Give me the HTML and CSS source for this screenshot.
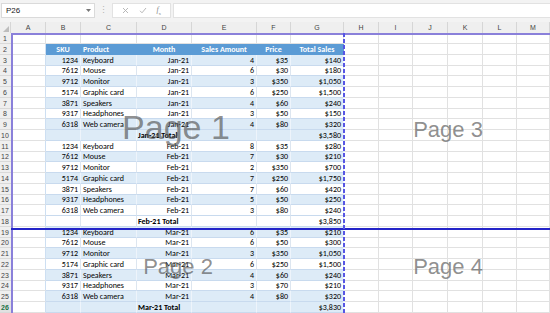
FILE: index.html
```html
<!DOCTYPE html>
<html lang="en">
<head>
<meta charset="utf-8">
<title>Page Break Preview</title>
<link rel="stylesheet" href="styles.css">
</head>
<body>
<div class="app">
  <div class="toolbar">
    <div class="namebox"><span>P26</span><svg class="caret" width="5" height="3" viewBox="0 0 5 3"><path d="M0 0H5L2.5 3Z" fill="#777"/></svg></div>
    <div class="grip">⋮</div>
    <div class="fxbtns">
      <svg width="7" height="7" viewBox="0 0 7 7"><path d="M1 1L6 6M6 1L1 6" stroke="#b0b0b0" stroke-width="0.9" fill="none"/></svg>
      <svg width="8" height="7" viewBox="0 0 8 7"><path d="M1 3.8L3 5.8L7 1" stroke="#b0b0b0" stroke-width="0.9" fill="none"/></svg>
      <span class="fx"><i>f</i><sub>x</sub></span>
    </div>
    <div class="formula"></div>
  </div>

  <div class="sheet">
    <div class="row hdr">
      <div class="corner"><svg width="6" height="6" viewBox="0 0 6 6"><path d="M6 0V6H0Z" fill="#bdbdbd"/></svg></div>
      <div class="ch">A</div><div class="ch">B</div><div class="ch">C</div><div class="ch">D</div><div class="ch">E</div><div class="ch">F</div><div class="ch">G</div><div class="ch">H</div><div class="ch">I</div><div class="ch">J</div><div class="ch">K</div><div class="ch">L</div><div class="ch">M</div>
    </div>

    <div class="row">
      <div class="rh">1</div><div class="c"></div>
      <div class="c"></div><div class="c"></div><div class="c"></div><div class="c"></div><div class="c"></div><div class="c"></div>
      <div class="c"></div><div class="c"></div><div class="c"></div><div class="c"></div><div class="c"></div><div class="c"></div>
    </div>

    <div class="row head">
      <div class="rh">2</div><div class="c ta"></div>
      <div class="t">SKU</div><div class="t l">Product</div><div class="t">Month</div><div class="t">Sales Amount</div><div class="t">Price</div><div class="t">Total Sales</div>
      <div class="c"></div><div class="c"></div><div class="c"></div><div class="c"></div><div class="c"></div><div class="c"></div>
    </div>

    <div class="row band">
      <div class="rh">3</div><div class="c ta"></div>
      <div class="t n">1234</div><div class="t">Keyboard</div><div class="t n">Jan-21</div><div class="t n">4</div><div class="t n">$35</div><div class="t n">$140</div>
      <div class="c"></div><div class="c"></div><div class="c"></div><div class="c"></div><div class="c"></div><div class="c"></div>
    </div>
    <div class="row">
      <div class="rh">4</div><div class="c ta"></div>
      <div class="t n">7612</div><div class="t">Mouse</div><div class="t n">Jan-21</div><div class="t n">6</div><div class="t n">$30</div><div class="t n">$180</div>
      <div class="c"></div><div class="c"></div><div class="c"></div><div class="c"></div><div class="c"></div><div class="c"></div>
    </div>
    <div class="row band">
      <div class="rh">5</div><div class="c ta"></div>
      <div class="t n">9712</div><div class="t">Monitor</div><div class="t n">Jan-21</div><div class="t n">3</div><div class="t n">$350</div><div class="t n">$1,050</div>
      <div class="c"></div><div class="c"></div><div class="c"></div><div class="c"></div><div class="c"></div><div class="c"></div>
    </div>
    <div class="row">
      <div class="rh">6</div><div class="c ta"></div>
      <div class="t n">5174</div><div class="t">Graphic card</div><div class="t n">Jan-21</div><div class="t n">6</div><div class="t n">$250</div><div class="t n">$1,500</div>
      <div class="c"></div><div class="c"></div><div class="c"></div><div class="c"></div><div class="c"></div><div class="c"></div>
    </div>
    <div class="row band">
      <div class="rh">7</div><div class="c ta"></div>
      <div class="t n">3871</div><div class="t">Speakers</div><div class="t n">Jan-21</div><div class="t n">4</div><div class="t n">$60</div><div class="t n">$240</div>
      <div class="c"></div><div class="c"></div><div class="c"></div><div class="c"></div><div class="c"></div><div class="c"></div>
    </div>
    <div class="row">
      <div class="rh">8</div><div class="c ta"></div>
      <div class="t n">9317</div><div class="t">Headphones</div><div class="t n">Jan-21</div><div class="t n">3</div><div class="t n">$50</div><div class="t n">$150</div>
      <div class="c"></div><div class="c"></div><div class="c"></div><div class="c"></div><div class="c"></div><div class="c"></div>
    </div>
    <div class="row band">
      <div class="rh">9</div><div class="c ta"></div>
      <div class="t n">6318</div><div class="t">Web camera</div><div class="t n">Jan-21</div><div class="t n">4</div><div class="t n">$80</div><div class="t n">$320</div>
      <div class="c"></div><div class="c"></div><div class="c"></div><div class="c"></div><div class="c"></div><div class="c"></div>
    </div>
    <div class="row band">
      <div class="rh">10</div><div class="c ta"></div>
      <div class="t"></div><div class="t"></div><div class="t tot">Jan-21 Total</div><div class="t"></div><div class="t"></div><div class="t n">$3,580</div>
      <div class="c"></div><div class="c"></div><div class="c"></div><div class="c"></div><div class="c"></div><div class="c"></div>
    </div>

    <div class="row">
      <div class="rh">11</div><div class="c ta"></div>
      <div class="t n">1234</div><div class="t">Keyboard</div><div class="t n">Feb-21</div><div class="t n">8</div><div class="t n">$35</div><div class="t n">$280</div>
      <div class="c"></div><div class="c"></div><div class="c"></div><div class="c"></div><div class="c"></div><div class="c"></div>
    </div>
    <div class="row band">
      <div class="rh">12</div><div class="c ta"></div>
      <div class="t n">7612</div><div class="t">Mouse</div><div class="t n">Feb-21</div><div class="t n">7</div><div class="t n">$30</div><div class="t n">$210</div>
      <div class="c"></div><div class="c"></div><div class="c"></div><div class="c"></div><div class="c"></div><div class="c"></div>
    </div>
    <div class="row">
      <div class="rh">13</div><div class="c ta"></div>
      <div class="t n">9712</div><div class="t">Monitor</div><div class="t n">Feb-21</div><div class="t n">2</div><div class="t n">$350</div><div class="t n">$700</div>
      <div class="c"></div><div class="c"></div><div class="c"></div><div class="c"></div><div class="c"></div><div class="c"></div>
    </div>
    <div class="row band">
      <div class="rh">14</div><div class="c ta"></div>
      <div class="t n">5174</div><div class="t">Graphic card</div><div class="t n">Feb-21</div><div class="t n">7</div><div class="t n">$250</div><div class="t n">$1,750</div>
      <div class="c"></div><div class="c"></div><div class="c"></div><div class="c"></div><div class="c"></div><div class="c"></div>
    </div>
    <div class="row">
      <div class="rh">15</div><div class="c ta"></div>
      <div class="t n">3871</div><div class="t">Speakers</div><div class="t n">Feb-21</div><div class="t n">7</div><div class="t n">$60</div><div class="t n">$420</div>
      <div class="c"></div><div class="c"></div><div class="c"></div><div class="c"></div><div class="c"></div><div class="c"></div>
    </div>
    <div class="row band">
      <div class="rh">16</div><div class="c ta"></div>
      <div class="t n">9317</div><div class="t">Headphones</div><div class="t n">Feb-21</div><div class="t n">5</div><div class="t n">$50</div><div class="t n">$250</div>
      <div class="c"></div><div class="c"></div><div class="c"></div><div class="c"></div><div class="c"></div><div class="c"></div>
    </div>
    <div class="row">
      <div class="rh">17</div><div class="c ta"></div>
      <div class="t n">6318</div><div class="t">Web camera</div><div class="t n">Feb-21</div><div class="t n">3</div><div class="t n">$80</div><div class="t n">$240</div>
      <div class="c"></div><div class="c"></div><div class="c"></div><div class="c"></div><div class="c"></div><div class="c"></div>
    </div>
    <div class="row">
      <div class="rh">18</div><div class="c ta"></div>
      <div class="t"></div><div class="t"></div><div class="t tot">Feb-21 Total</div><div class="t"></div><div class="t"></div><div class="t n">$3,850</div>
      <div class="c"></div><div class="c"></div><div class="c"></div><div class="c"></div><div class="c"></div><div class="c"></div>
    </div>

    <div class="row band">
      <div class="rh">19</div><div class="c ta"></div>
      <div class="t n">1234</div><div class="t">Keyboard</div><div class="t n">Mar-21</div><div class="t n">6</div><div class="t n">$35</div><div class="t n">$210</div>
      <div class="c"></div><div class="c"></div><div class="c"></div><div class="c"></div><div class="c"></div><div class="c"></div>
    </div>
    <div class="row">
      <div class="rh">20</div><div class="c ta"></div>
      <div class="t n">7612</div><div class="t">Mouse</div><div class="t n">Mar-21</div><div class="t n">6</div><div class="t n">$50</div><div class="t n">$300</div>
      <div class="c"></div><div class="c"></div><div class="c"></div><div class="c"></div><div class="c"></div><div class="c"></div>
    </div>
    <div class="row band">
      <div class="rh">21</div><div class="c ta"></div>
      <div class="t n">9712</div><div class="t">Monitor</div><div class="t n">Mar-21</div><div class="t n">3</div><div class="t n">$350</div><div class="t n">$1,050</div>
      <div class="c"></div><div class="c"></div><div class="c"></div><div class="c"></div><div class="c"></div><div class="c"></div>
    </div>
    <div class="row">
      <div class="rh">22</div><div class="c ta"></div>
      <div class="t n">5174</div><div class="t">Graphic card</div><div class="t n">Mar-21</div><div class="t n">6</div><div class="t n">$250</div><div class="t n">$1,500</div>
      <div class="c"></div><div class="c"></div><div class="c"></div><div class="c"></div><div class="c"></div><div class="c"></div>
    </div>
    <div class="row band">
      <div class="rh">23</div><div class="c ta"></div>
      <div class="t n">3871</div><div class="t">Speakers</div><div class="t n">Mar-21</div><div class="t n">4</div><div class="t n">$60</div><div class="t n">$240</div>
      <div class="c"></div><div class="c"></div><div class="c"></div><div class="c"></div><div class="c"></div><div class="c"></div>
    </div>
    <div class="row">
      <div class="rh">24</div><div class="c ta"></div>
      <div class="t n">9317</div><div class="t">Headphones</div><div class="t n">Mar-21</div><div class="t n">3</div><div class="t n">$70</div><div class="t n">$210</div>
      <div class="c"></div><div class="c"></div><div class="c"></div><div class="c"></div><div class="c"></div><div class="c"></div>
    </div>
    <div class="row band">
      <div class="rh">25</div><div class="c ta"></div>
      <div class="t n">6318</div><div class="t">Web camera</div><div class="t n">Mar-21</div><div class="t n">4</div><div class="t n">$80</div><div class="t n">$320</div>
      <div class="c"></div><div class="c"></div><div class="c"></div><div class="c"></div><div class="c"></div><div class="c"></div>
    </div>
    <div class="row band">
      <div class="rh active">26</div><div class="c ta"></div>
      <div class="t"></div><div class="t"></div><div class="t tot">Mar-21 Total</div><div class="t"></div><div class="t"></div><div class="t n">$3,830</div>
      <div class="c"></div><div class="c"></div><div class="c"></div><div class="c"></div><div class="c"></div><div class="c"></div>
    </div>

    <div class="pb pb-top"></div>
    <div class="pb pb-left"></div>
    <div class="pb pb-h"></div>
    <div class="pb pb-v"></div>

    <div class="wm wm-1">Page 1</div>
    <div class="wm wm-2">Page 2</div>
    <div class="wm wm-3">Page 3</div>
    <div class="wm wm-4">Page 4</div>
  </div>
</div>
</body>
</html>
```

FILE: styles.css
```css
* { box-sizing: border-box; margin: 0; padding: 0; }

html, body {
  width: 550px;
  height: 313px;
  overflow: hidden;
  background: #fff;
}

body {
  font-family: "Liberation Sans", Arial, sans-serif;
}

.app {
  display: flex;
  flex-direction: column;
  width: 550px;
  height: 313px;
}

/* ---------- formula bar ---------- */
.toolbar {
  height: 22px;
  flex: none;
  background: #f3f3f3;
  display: flex;
  align-items: flex-start;
  padding: 3px 0 0 1px;
}

.namebox {
  width: 94px;
  height: 15px;
  background: #fff;
  border: 1px solid #dadada;
  display: flex;
  align-items: center;
  justify-content: space-between;
  padding: 0 3px 0 4px;
  font-size: 8px;
  color: #222;
}

.grip {
  width: 17px;
  height: 15px;
  text-align: center;
  color: #b4b4b4;
  font-size: 9px;
  line-height: 15px;
}

.fxbtns {
  width: 59px;
  height: 15px;
  background: #fff;
  border: 1px solid #e2e2e2;
  display: flex;
  align-items: center;
  justify-content: space-around;
  padding: 0 4px;
}

.fx {
  font-family: "Liberation Serif", serif;
  font-size: 8px;
  color: #8a8a8a;
}

.fx sub { font-size: 5px; }

.formula {
  flex: 1;
  height: 15px;
  margin-left: 2px;
  background: #fff;
  border: 1px solid #e2e2e2;
  border-right: none;
}

/* ---------- grid ---------- */
.sheet {
  position: relative;
  flex: 1;
  display: grid;
  grid-template-columns: 11px 35px 35px 56px 55px 65px 34px 53px 35px 34px 35px 35px 34px 1fr;
  grid-template-rows: 11px repeat(6, 11px 11px 11px 10px) 11px 11px;
  font-family: Carlito, Lato, sans-serif;
  font-size: 8px;
  color: #000;
  overflow: hidden;
}

.row { display: contents; }

.corner {
  background: #efefef;
  border-right: 1px solid #d6d6d6;
  display: flex;
  align-items: flex-end;
  justify-content: flex-end;
  padding: 0 1px 1px 0;
}

.ch {
  background: #efefef;
  border-right: 1px solid #d6d6d6;
  font: 7px "Liberation Sans", Arial, sans-serif;
  color: #444;
  display: flex;
  align-items: center;
  justify-content: center;
}

.rh {
  background: #efefef;
  border-bottom: 1px solid #d9d9d9;
  font: 7px "Liberation Sans", Arial, sans-serif;
  color: #444;
  display: flex;
  align-items: center;
  justify-content: center;
  padding-right: 1px;
}

.rh.active {
  background: #e1e1e1;
  color: #217346;
  font-weight: bold;
}

.c {
  border-right: 1px solid #e1e1e1;
  border-bottom: 1px solid #e1e1e1;
}

.c.ta { border-right-color: #cddff2; }

.t {
  display: flex;
  align-items: flex-end;
  justify-content: flex-start;
  line-height: 10px;
  padding: 0 2px 0 2px;
  white-space: nowrap;
  border-right: 1px solid #dde6f0;
  border-bottom: 1px solid #c8daee;
}

.t.n { justify-content: flex-end; }

.t.tot {
  font-weight: bold;
  padding-left: 1px;
}

.band .t {
  background: #ddebf7;
  border-right-color: #eef4fb;
}

.head .t {
  background: #5b9bd5;
  color: #fff;
  font-weight: bold;
  justify-content: center;
  border-right-color: #5b9bd5;
  border-bottom-color: #5b9bd5;
}

.head .t.l { justify-content: flex-start; }

/* ---------- page break overlays ---------- */
.pb { position: absolute; }

.pb-top {
  left: 11px;
  right: 0;
  top: 11px;
  height: 2px;
  background: #8a80da;
}

.pb-left {
  left: 11px;
  top: 11px;
  bottom: 0;
  width: 2px;
  background: #8a80da;
}

.pb-h {
  left: 11px;
  right: 0;
  top: 206px;
  height: 2px;
  background: #2424c8;
}

.pb-v {
  left: 343px;
  top: 11px;
  bottom: 0;
  width: 2px;
  background: repeating-linear-gradient(to bottom, #5656e4 0 4px, transparent 4px 6px);
}

/* ---------- watermarks ---------- */
.wm {
  position: absolute;
  font-family: "Liberation Sans", Arial, sans-serif;
  color: rgba(80, 80, 80, 0.65);
  line-height: 1;
  white-space: nowrap;
  transform: translate(-50%, -50%);
  pointer-events: none;
}

.wm-1 { left: 176px; top: 105px; font-size: 34px; }
.wm-2 { left: 178px; top: 245px; font-size: 22px; }
.wm-3 { left: 448px; top: 108px; font-size: 22px; }
.wm-4 { left: 448px; top: 245px; font-size: 22px; }
```
